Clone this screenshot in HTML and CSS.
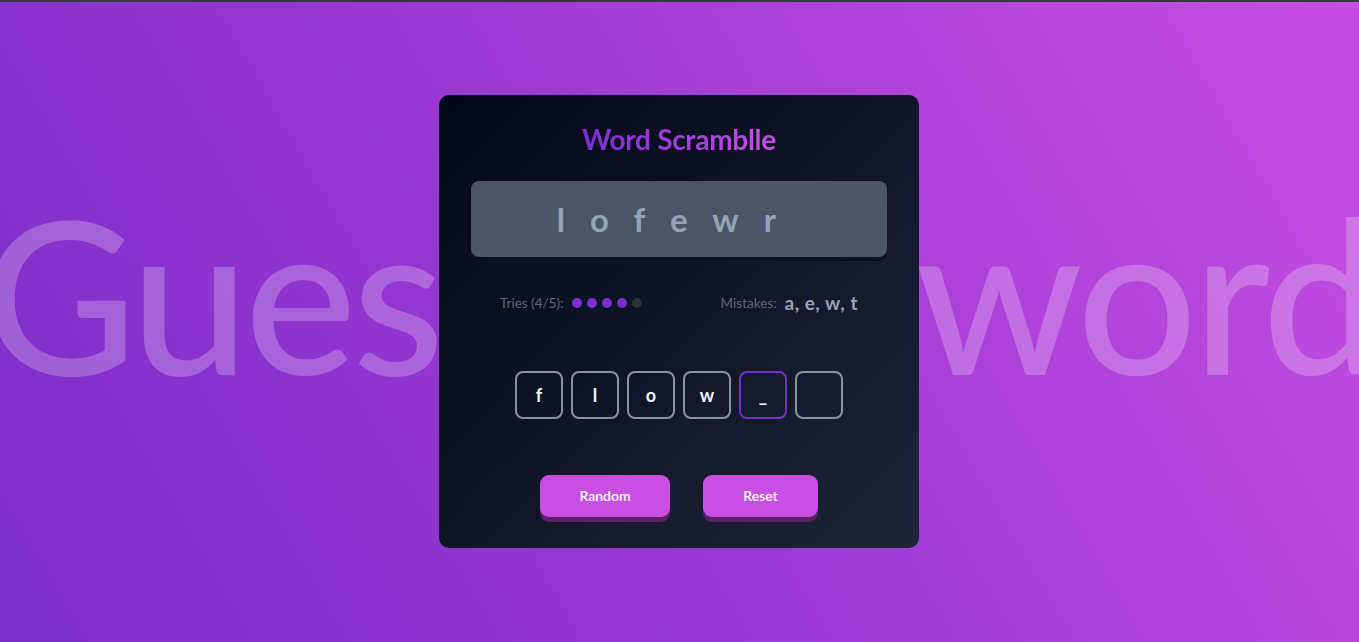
FILE: index.html
```html
<!DOCTYPE html>
<html lang="en">
<head>
<meta charset="utf-8">
<title>Word Scramble</title>
<link rel="stylesheet" href="styles.css">
</head>
<body>
<div class="topline"></div>
<main class="stage">
  <div class="bg-text" aria-hidden="true">Guess the word</div>
  <section class="card">
    <h1 class="title">Word Scramblle</h1>
    <div class="scramble">lofewr</div>
    <div class="status">
      <div class="tries">
        <span class="label">Tries (4/5):</span>
        <span class="dots">
          <i class="dot on"></i><i class="dot on"></i><i class="dot on"></i><i class="dot on"></i><i class="dot"></i>
        </span>
      </div>
      <div class="mistakes">
        <span class="label">Mistakes:</span>
        <span class="wrong">a, e, w, t</span>
      </div>
    </div>
    <div class="inputs">
      <div class="cell">f</div>
      <div class="cell">l</div>
      <div class="cell">o</div>
      <div class="cell">w</div>
      <div class="cell active">_</div>
      <div class="cell"></div>
    </div>
    <div class="actions">
      <button class="btn btn-random">Random</button>
      <button class="btn btn-reset">Reset</button>
    </div>
  </section>
</main>
</body>
</html>
```

FILE: styles.css
```css
* { box-sizing: border-box; }

html, body {
  margin: 0;
  height: 100%;
}

body {
  font-family: "Lato", "Inter", sans-serif;
  background: linear-gradient(60deg, #7a2dc8 0%, #9a38d4 45%, #c64fe1 100%);
  overflow: hidden;
  display: flex;
  flex-direction: column;
}

.topline {
  height: 2px;
  background: #3b3545;
  flex: none;
}

.stage {
  position: relative;
  flex: 1;
  display: flex;
  align-items: center;
  justify-content: center;
  margin-top: -2px;
}

.bg-text {
  position: absolute;
  left: 50%;
  top: 187px;
  transform: translateX(-50%);
  white-space: nowrap;
  font-family: "Lato", sans-serif;
  font-size: 212px;
  font-weight: 500;
  line-height: 1;
  color: rgba(255, 255, 255, 0.24);
  letter-spacing: -4.5px;
  user-select: none;
}

.card {
  position: relative;
  width: 480px;
  height: 453px;
  margin-left: -1px;
  padding: 28px 32px 31px;
  border-radius: 10px;
  background: linear-gradient(135deg, #04071a 0%, #0f1526 50%, #1d2636 100%);
  display: flex;
  flex-direction: column;
  align-items: stretch;
}

.title {
  margin: 0 0 26px;
  text-align: center;
  font-size: 28px;
  line-height: 32px;
  font-weight: 700;
  letter-spacing: -0.3px;
  background: linear-gradient(90deg, #7b2cd0, #c950e3);
  -webkit-background-clip: text;
  background-clip: text;
  color: transparent;
  align-self: center;
}

.scramble {
  height: 76px;
  border-radius: 8px;
  background: #4b5565;
  box-shadow: 0 4px 0 #0b1020;
  display: flex;
  align-items: center;
  justify-content: center;
  font-size: 33px;
  font-weight: 700;
  color: #94a3b8;
  letter-spacing: 25px;
}

.status {
  margin-top: 34px;
  height: 24px;
  padding: 0 29px;
  display: flex;
  align-items: center;
  justify-content: space-between;
}

.tries, .mistakes {
  display: flex;
  align-items: center;
  gap: 8px;
}

.tries { gap: 9px; }

.label {
  font-size: 13.5px;
  color: #5d6677;
}

.dots {
  display: flex;
  gap: 5px;
}

.dot {
  width: 10px;
  height: 10px;
  border-radius: 50%;
  background: #2b313d;
}

.dot.on {
  background: #7a2ed0;
}

.wrong {
  font-size: 19px;
  font-weight: 700;
  color: #97a3b8;
  letter-spacing: 0.5px;
}

.inputs {
  margin-top: 56px;
  display: flex;
  justify-content: center;
  gap: 8px;
}

.cell {
  width: 48px;
  height: 48px;
  border: 2px solid #8a93a3;
  border-radius: 8px;
  display: flex;
  align-items: center;
  justify-content: center;
  color: #f1f5ff;
  font-size: 18px;
  font-weight: 700;
}

.cell.active {
  border-color: #7a2ed0;
}

.actions {
  margin-top: 56px;
  display: flex;
  justify-content: center;
  gap: 33px;
}

.btn {
  height: 42px;
  border: none;
  border-radius: 9px;
  background: #c84fe2;
  box-shadow: 0 5px 0 #5a2166;
  color: #fff;
  font-family: inherit;
  font-size: 14px;
  font-weight: 600;
  cursor: pointer;
}

.btn-random { width: 130px; }
.btn-reset { width: 115px; }
```
